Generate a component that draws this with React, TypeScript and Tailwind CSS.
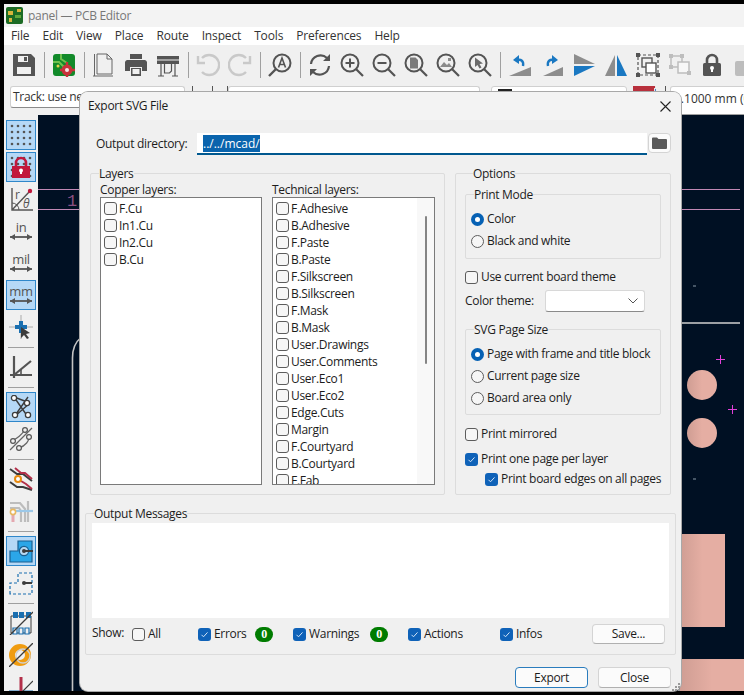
import React from 'react';

const G = '#545454';

const Ic = ({ children, size = 24 }: { children: React.ReactNode; size?: number }) => (
  <svg width={size} height={size} viewBox="0 0 24 24" fill="none">{children}</svg>
);

const Mag = ({ children, c = G }: { children?: React.ReactNode; c?: string }) => (
  <Ic>
    <circle cx="10" cy="10" r="8.5" stroke={c} strokeWidth="2" fill="#f0f0f0" />
    <path d="M16 16l7 7" stroke={c} strokeWidth="2.2" />
    {children}
  </Ic>
);

const topIcons: Record<string, React.ReactNode> = {
  save: <Ic><path fillRule="evenodd" d="M1 1h18l4 4v18H1zM6 3v6h10V3zM12 4h3v4h-3zM5 14v7h14v-7z" fill={G} /></Ic>,
  pcb: (
    <Ic>
      <rect x="1" y="1" width="22" height="22" rx="3" fill="#128a2a" />
      <path d="M1 9h6l5 5M9 1v5l6 4" stroke="#6fc04e" strokeWidth="2" />
      <circle cx="6" cy="13" r="1.5" fill="#e8d24a" />
      <circle cx="15" cy="17" r="5.5" fill="#c8323a" />
      <circle cx="15" cy="17" r="2" fill="#f4e4e4" />
      <path d="M15 9v3M15 22v2M8 17h2M20 17h3" stroke="#c8323a" strokeWidth="2.4" />
    </Ic>
  ),
  page: <Ic><path d="M5 1h10l5 5v15H5zM1 23h20M2.500 1v22M15 1v5h5" stroke="#666" strokeWidth="1" /></Ic>,
  print: <Ic><path fillRule="evenodd" d="M6 1h12v5H6zM3 7h18a3 3 0 0 1 2 2v9h-5v-4H6v4H1V9a3 3 0 0 1 2-2z" fill={G} /><rect x="7" y="15" width="10" height="8" fill={G} /><rect x="8.5" y="16" width="7" height="5" fill="#f0f0f0" /></Ic>,
  plot: <Ic><path d="M1 3h22v8H1z" fill={G} /><path d="M1 7h22" stroke="#f0f0f0" strokeWidth="1" /><path d="M5 11v12M19 11v12M2 23h6M16 23h6M8.500 11v9h5l2-2v-7" stroke={G} strokeWidth="1.2" /></Ic>,
  undo: <Ic><path d="M6 5a10 10 0 1 1 0 14" stroke="#c9c9c9" strokeWidth="2.4" /><path d="M2 3v7h7" stroke="#c9c9c9" strokeWidth="2.4" /></Ic>,
  redo: <Ic><path d="M18 5a10 10 0 1 0 0 14" stroke="#c9c9c9" strokeWidth="2.4" /><path d="M22 3v7h-7" stroke="#c9c9c9" strokeWidth="2.4" /></Ic>,
  find: <Ic><circle cx="14" cy="10" r="8.5" stroke={G} strokeWidth="2" /><path d="M8 16l-7 7" stroke={G} strokeWidth="2.4" /><path d="M10.500 14.500L14 5l3.500 9.500M11.800 11.500h4.400" stroke={G} strokeWidth="1.6" /></Ic>,
  refresh: <Ic><path d="M3 11a9.5 9.5 0 0 1 16-6M21 13a9.5 9.5 0 0 1-16 6" stroke={G} strokeWidth="2.2" /><path d="M22 1v7h-7zM2 23v-7h7z" fill={G} /></Ic>,
  zin: <Mag><path d="M10 5.500v9M5.500 10h9" stroke={G} strokeWidth="2" /></Mag>,
  zout: <Mag><path d="M5.500 10h9" stroke={G} strokeWidth="2" /></Mag>,
  zpage: <Mag><path d="M6 4.500h5.500L14 7v8.500H6z" fill="#7a7a7a" /></Mag>,
  zobj: <Mag><path d="M4 14l4-5 3 3 2-2 3 4zM12 5h3v3h-3z" fill="#8a8a8a" /></Mag>,
  zsel: <Mag><path d="M7 4.500l8 6-3.500.5 2 3.500-2 1-2-3.500L7 14z" fill="#6a6a6a" /></Mag>,
  rotccw: <Ic><path d="M1 23l22-9v9z" fill="#8d8d8d" /><path d="M15 13c1-5-2-7-6-6" stroke="#1a78c2" strokeWidth="2.4" /><path d="M11 2v9L5 7z" fill="#1a78c2" /></Ic>,
  rotcw: <Ic><path d="M23 23L3 14v9z" fill="#8d8d8d" transform="matrix(-1 0 0 1 26 0)" /><path d="M8 13c-1-5 2-7 6-6" stroke="#1a78c2" strokeWidth="2.4" /><path d="M12 2v9l6-4z" fill="#1a78c2" /></Ic>,
  mirH: <Ic><path d="M2 1l21 10H2z" fill="#8d8d8d" /><path d="M2 23l21-10H2z" fill="#1a78c2" /></Ic>,
  mirV: <Ic><path d="M11 2L1 23h10z" fill="#8d8d8d" /><path d="M13 2l10 21H13z" fill="#1a78c2" /></Ic>,
  group: <Ic><rect x="2" y="2" width="20" height="20" stroke={G} strokeWidth="1.2" strokeDasharray="3 2" /><path d="M0 0h4v4H0zM20 0h4v4h-4zM0 20h4v4H0zM20 20h4v4h-4z" fill={G} /><rect x="6" y="5" width="10" height="9" fill="#f0f0f0" stroke={G} strokeWidth="1.4" /><rect x="10" y="10" width="10" height="10" fill="#fff" stroke={G} strokeWidth="1.4" /></Ic>,
  ungroup: <Ic><rect x="3" y="3" width="11" height="11" stroke="#bdbdbd" strokeWidth="1.5" /><rect x="10" y="9" width="11" height="11" fill="#f7f7f7" stroke="#bdbdbd" strokeWidth="1.5" /><path d="M1 1h4v4H1zM12 1h4v4h-4zM1 12h4v4H1zM19 18h4v4h-4z" fill="#bdbdbd" /></Ic>,
  lock: <Ic><path d="M7 11V7a5 5 0 0 1 10 0v4" stroke={G} strokeWidth="2.6" /><rect x="3" y="10" width="18" height="13" rx="1.5" fill={G} /><circle cx="12" cy="15" r="2" fill="#fff" /><path d="M11 15h2v4h-2z" fill="#fff" /></Ic>,
  next: <Ic><rect x="3" y="8" width="18" height="15" rx="2" fill="#bdbdbd" /></Ic>,
};

const topBar = ['save', '|', 'pcb', '|', 'page', 'print', 'plot', '|', 'undo', 'redo', '|', 'find', '|', 'refresh', 'zin', 'zout', 'zpage', 'zobj', 'zsel', '|', 'rotccw', 'rotcw', 'mirH', 'mirV', 'group', 'ungroup', 'lock', 'next'];

const Dots = () => (
  <>
    {[4, 10, 16, 22].map(y => [3, 9, 15, 21].map(x => <circle key={`${x}-${y}`} cx={x} cy={y - 1} r="1.3" fill="#555" />))}
  </>
);

const UnitIcon = ({ label }: { label: string }) => (
  <Ic>
    <text x="12" y="13" textAnchor="middle" fontSize="13" fontFamily="'Open Sans', sans-serif" fill={G}>{label}</text>
    <path d="M1 18h22" stroke={G} strokeWidth="1.8" />
    <path d="M1 18l5-3v6zM23 18l-5-3v6z" fill={G} />
  </Ic>
);

const sideIcons: Record<string, React.ReactNode> = {
  grid: <Ic><Dots /></Ic>,
  snap: <Ic><Dots /><path d="M7 12V8a5 5 0 0 1 10 0v4" stroke="#c2183c" strokeWidth="2.6" /><path d="M3 11h18v12H3z" fill="#c2183c" /><circle cx="12" cy="15.500" r="2" fill="#fff" /><path d="M11 16h2v3h-2z" fill="#fff" /></Ic>,
  polar: (
    <Ic>
      <path d="M3 1v22h21M3 23L21 4" stroke={G} strokeWidth="1.4" />
      <path d="M3 16a7 7 0 0 1 7 7" stroke={G} strokeWidth="1" />
      <circle cx="21" cy="4" r="2.2" fill="#c2183c" />
      <text x="6" y="12" fontSize="12" fontFamily="'Open Sans', sans-serif" fill={G}>r</text>
      <text x="14" y="21" fontSize="12" fontStyle="italic" fontFamily="'Open Sans', sans-serif" fill={G}>θ</text>
    </Ic>
  ),
  inch: <UnitIcon label="in" />,
  mil: <UnitIcon label="mil" />,
  mm: <UnitIcon label="mm" />,
  cursor: <Ic><path d="M0 12h24M12 0v24" stroke="#aaa" strokeWidth="1" /><path d="M10 6h4v4h4v4h-4v4h-4v-4H6v-4h4z" fill="#1a6fb0" /><path d="M12 12l9 6-4 1 3 4-2 1-3-4-3 3z" fill="#3c3c3c" /></Ic>,
  angle: <Ic><path d="M5 1v22M1 20h22M5 20L22 6" stroke={G} strokeWidth="2.2" /><path d="M12 14v6" stroke={G} strokeWidth="1.6" /></Ic>,
  net: <Ic><path d="M5 2l16 6M5 2l14 20M19 2L5 22M21 8L5 22" stroke="#3c3c3c" strokeWidth="1.4" /><circle cx="5" cy="3" r="2.6" fill="#fff" stroke="#3c3c3c" strokeWidth="1.3" /><circle cx="18" cy="8" r="2.6" fill="#fff" stroke="#3c3c3c" strokeWidth="1.3" /><circle cx="6" cy="20" r="2.6" fill="#fff" stroke="#3c3c3c" strokeWidth="1.3" /><circle cx="19" cy="20" r="2.6" fill="#fff" stroke="#3c3c3c" strokeWidth="1.3" /></Ic>,
  ratsnest: <Ic><path d="M1 23L23 1" stroke="#666" strokeWidth="1.2" /><path d="M4 13c4-1 9-6 11-9M20 8c1 6-4 11-10 13" stroke="#666" strokeWidth="1.2" /><circle cx="4" cy="14" r="2.4" fill="#f0f0f0" stroke="#555" strokeWidth="1.2" /><circle cx="16" cy="3" r="2.4" fill="#f0f0f0" stroke="#555" strokeWidth="1.2" /><circle cx="20" cy="10" r="2.4" fill="#f0f0f0" stroke="#555" strokeWidth="1.2" /><circle cx="10" cy="21" r="2.4" fill="#f0f0f0" stroke="#555" strokeWidth="1.2" /></Ic>,
  track: <Ic><path d="M1 2l7 5h6l9 7M1 15l7 5h6l9 3" stroke="#3c3c3c" strokeWidth="2" /><path d="M6 1l6 5h4l7 6M12 14l5 3 6 5" stroke="#b3304a" strokeWidth="2" /><circle cx="9" cy="12" r="3" fill="#fff" stroke="#e88a10" strokeWidth="2" /></Ic>,
  ghost: <Ic><path d="M1 4h10l5 6v13M1 9h9l2 3v11M19 2v21" stroke="#bdbdbd" strokeWidth="2.2" /><path d="M4 16v7" stroke="#e4a8b0" strokeWidth="3" /><path d="M6 12h18" stroke="#9cc8e8" strokeWidth="2.2" /><circle cx="4" cy="13" r="2.6" fill="#fff" stroke="#e8b860" strokeWidth="1.6" /></Ic>,
  pad: <Ic><path d="M1 23V12h8V2h14v21z" fill="#2ba6e8" stroke="#1a5f90" strokeWidth="1.2" /><circle cx="15" cy="12" r="4.6" fill="#b7d8f2" stroke="#1a5f90" strokeWidth="1.2" /><path d="M14 12h10" stroke="#3c3c3c" strokeWidth="2" /><circle cx="15" cy="12" r="2" fill="#3c3c3c" /></Ic>,
  padDash: <Ic><path d="M1 23V12h8V2h14v21z" stroke="#1a6fb0" strokeWidth="1.2" strokeDasharray="3 2" /><path d="M14 12h9" stroke="#3c3c3c" strokeWidth="2" /><circle cx="15" cy="12" r="2" fill="#3c3c3c" /></Ic>,
  footprint: <Ic><path d="M2 5h20v17H2z" stroke="#3c3c3c" strokeWidth="1" /><path d="M4 1h5v6H4zM10 1h5v6h-5zM17 1h5v6h-5z" fill="#1a6fb0" /><path d="M4 17h4v6H4zM10 17h4v6h-4zM16 17h4v6h-4z" fill="#f0f0f0" stroke="#1a6fb0" strokeWidth="1.2" /><path d="M1 24L24 1" stroke="#3c3c3c" strokeWidth="1.3" /></Ic>,
  via: <Ic><circle cx="11" cy="12" r="8" stroke="#f09c10" strokeWidth="6" /><circle cx="14" cy="13" r="7" stroke="#cfcfcf" strokeWidth="1.4" /><path d="M0 24L24 0" stroke="#3c3c3c" strokeWidth="1.3" /></Ic>,
  tuned: <Ic><path d="M0 17h24" stroke="#1a6fb0" strokeWidth="3" /><path d="M12 2v22" stroke="#b3304a" strokeWidth="3" /><path d="M6 24L24 6M0 21h24" stroke="#3c3c3c" strokeWidth="1.2" /></Ic>,
};

const sideBar: [string, boolean][] = [
  ['grid', true], ['snap', true], ['polar', false], ['inch', false], ['mil', false], ['mm', true], ['cursor', false],
  ['|', false], ['angle', false], ['|', false], ['net', true], ['ratsnest', false], ['|', false], ['track', false],
  ['ghost', false], ['|', false], ['pad', true], ['padDash', false], ['|', false], ['footprint', false], ['via', false], ['tuned', false],
];

const copperLayers = ['F.Cu', 'In1.Cu', 'In2.Cu', 'B.Cu'];
const techLayers = ['F.Adhesive', 'B.Adhesive', 'F.Paste', 'B.Paste', 'F.Silkscreen', 'B.Silkscreen', 'F.Mask', 'B.Mask', 'User.Drawings', 'User.Comments', 'User.Eco1', 'User.Eco2', 'Edge.Cuts', 'Margin', 'F.Courtyard', 'B.Courtyard', 'F.Fab'];

const Check = ({ on = false }: { on?: boolean }) => (
  on ? (
    <span className="w-[13px] h-[13px] shrink-0 rounded-[3px] bg-[#0f62b8] flex items-center justify-center">
      <svg width="9" height="9" viewBox="0 0 9 9" fill="none"><path d="M1.500 4.800l2 2 4-4.400" stroke="#cfe3f7" strokeWidth="1" /></svg>
    </span>
  ) : (
    <span className="w-[13px] h-[13px] shrink-0 rounded-[3px] border border-[#5c5c5c] bg-[#f6f6f6]" />
  )
);

const Radio = ({ on = false }: { on?: boolean }) => (
  on ? (
    <span className="w-[13px] h-[13px] shrink-0 rounded-full bg-[#0661b4] flex items-center justify-center">
      <span className="w-[5px] h-[5px] rounded-full bg-white" />
    </span>
  ) : (
    <span className="w-[13px] h-[13px] shrink-0 rounded-full border border-[#5c5c5c] bg-[#f6f6f6]" />
  )
);

const LayerRow = ({ name }: { name: string }) => (
  <div className="h-[17px] shrink-0 flex items-center gap-[2px] pl-[3px]"><Check /><span>{name}</span></div>
);

const RadioRow = ({ label, on }: { label: string; on?: boolean }) => (
  <div className="h-[22px] flex items-center gap-[3px] pl-[5px]"><Radio on={on} /><span>{label}</span></div>
);

const CheckRow = ({ label, on, className = '' }: { label: string; on?: boolean; className?: string }) => (
  <div className={`h-[16px] flex items-center gap-[3px] whitespace-nowrap ${className}`}><Check on={on} /><span>{label}</span></div>
);

const Box = ({ title, className, children }: { title: string; className: string; children: React.ReactNode }) => (
  <fieldset className={`border border-[#dcdcdc] rounded-[2px] ${className}`}>
    <legend className="ml-[8px] leading-[16px] relative top-[1px]">{title}</legend>
    {children}
  </fieldset>
);

const Badge = () => (
  <span className="w-[18px] h-[15px] rounded-full bg-[#007c00] text-white flex items-center justify-center text-[12px] font-bold font-['Liberation_Serif',serif]">0</span>
);

const Combo = ({ className, children }: { className: string; children?: React.ReactNode }) => (
  <div className={`h-[22px] bg-white border border-[#d0d0d0] border-b-[#8a8a8a] rounded-[3px] shrink-0 flex items-center overflow-hidden whitespace-nowrap ${className}`}>{children}</div>
);

const Tick = ({ className }: { className: string }) => (
  <div className={`w-[1px] h-[22px] bg-[#555] shrink-0 ${className}`} />
);

const ExportDialog = () => (
  <div className="absolute left-[80px] top-[92px] w-[601px] h-[599px] bg-[#f0f0f0] rounded-[8px] shadow-[0_0_0_1px_#a8a8a8] flex flex-col text-[#1c1c1c] text-[12px]">
    <div className="h-[28px] bg-[#f3f3f3] rounded-t-[8px] flex items-center justify-between pl-[8px] pr-[10px] shrink-0">
      <span>Export SVG File</span>
      <svg width="11" height="11" viewBox="0 0 11 11"><path d="M0.500 0.500l10 10M10.500 0.500l-10 10" stroke="#222" strokeWidth="1.1" /></svg>
    </div>

    <div className="mt-[13px] h-[22px] flex items-start pl-[16px] shrink-0">
      <span className="w-[101px] leading-[22px]">Output directory:</span>
      <div className="w-[450px] h-[22px] bg-white border-b-2 border-[#00588f] pl-[6px] pt-[2px]">
        <span className="bg-[#0a64ad] text-white inline-block leading-[17px] tracking-[0px]">../../mcad/</span>
      </div>
      <div className="ml-[1px] w-[23px] h-[20px] bg-[#fbfbfb] border border-[#d4d4d4] rounded-[4px] flex items-center justify-center">
        <svg width="15" height="12" viewBox="0 0 15 12"><path d="M0 1.500a1 1 0 0 1 1-1h4l1.500 1.500H14a1 1 0 0 1 1 1V11a1 1 0 0 1-1 1H1a1 1 0 0 1-1-1z" fill="#5a5a5a" /></svg>
      </div>
    </div>

    <div className="mt-[10px] h-[330px] flex gap-[10px] pl-[10px] shrink-0">
      <Box title="Layers" className="w-[355px] h-[330px]">
        <div className="flex gap-[10px] px-[9px]">
          <div className="w-[162px]">
            <div className="h-[16px] leading-[18px]">Copper layers:</div>
            <div className="h-[288px] bg-white border border-[#7a7a7a] pt-[2px]">
              {copperLayers.map(l => <LayerRow key={l} name={l} />)}
            </div>
          </div>
          <div className="w-[163px]">
            <div className="h-[16px] leading-[18px]">Technical layers:</div>
            <div className="h-[288px] bg-white border border-[#7a7a7a] flex overflow-hidden">
              <div className="flex-1 pt-[2px] flex flex-col">
                {techLayers.map(l => <LayerRow key={l} name={l} />)}
              </div>
              <div className="w-[17px] bg-[#f8f8f8] flex justify-center pt-[18px]">
                <div className="w-[2px] h-[148px] bg-[#858585] rounded-full" />
              </div>
            </div>
          </div>
        </div>
      </Box>

      <Box title="Options" className="w-[216px] h-[330px] px-[9px]">
        <Box title="Print Mode" className="mt-[5px] h-[73px]">
          <div className="pt-[6px]">
            <RadioRow label="Color" on />
            <RadioRow label="Black and white" />
          </div>
        </Box>
        <CheckRow label="Use current board theme" className="mt-[10px]" />
        <div className="mt-[5px] h-[22px] flex items-center">
          <span className="w-[80px]">Color theme:</span>
          <Combo className="w-[100px] justify-end pr-[6px] border-[#d8d8d8]">
            <svg width="10" height="6" viewBox="0 0 10 6" fill="none"><path d="M0.500 0.500L5 5l4.500-4.500" stroke="#555" /></svg>
          </Combo>
        </div>
        <Box title="SVG Page Size" className="mt-[9px] h-[94px]">
          <div className="pt-[6px]">
            <RadioRow label="Page with frame and title block" on />
            <RadioRow label="Current page size" />
            <RadioRow label="Board area only" />
          </div>
        </Box>
        <CheckRow label="Print mirrored" className="mt-[11px]" />
        <CheckRow label="Print one page per layer" on className="mt-[9px]" />
        <CheckRow label="Print board edges on all pages" on className="mt-[4px] pl-[20px]" />
      </Box>
    </div>

    <Box title="Output Messages" className="mt-[10px] ml-[5px] w-[591px] h-[150px] shrink-0">
      <div className="mx-[6px] mt-[2px] h-[95px] bg-white" />
      <div className="mt-[6px] mx-[6px] h-[20px] flex items-center">
        <span className="w-[40px] -mt-[2px]">Show:</span>
        <div className="w-[66px]"><CheckRow label="All" /></div>
        <div className="w-[95px] flex items-center"><div className="w-[57px]"><CheckRow label="Errors" on /></div><Badge /></div>
        <div className="w-[115px] flex items-center"><div className="w-[77px]"><CheckRow label="Warnings" on /></div><Badge /></div>
        <div className="w-[92px]"><CheckRow label="Actions" on /></div>
        <CheckRow label="Infos" on />
        <button className="ml-auto mr-[4px] w-[73px] h-[20px] bg-[#fbfbfb] border border-[#d4d4d4] border-b-[#b0b0b0] rounded-[4px]">Save...</button>
      </div>
    </Box>

    <div className="mt-[12px] pr-[10px] flex justify-end gap-[10px]">
      <button className="w-[73px] h-[21px] bg-[#fbfbfb] border border-[#2a7cbd] rounded-[4px]">Export</button>
      <button className="w-[73px] h-[21px] bg-[#fbfbfb] border border-[#d4d4d4] border-b-[#b0b0b0] rounded-[4px]">Close</button>
    </div>

    <svg className="absolute right-0 bottom-0" width="10" height="9" viewBox="0 0 10 9" fill="#9a9a9a">
      <path d="M7 1h2v2H7zM4 4h2v2H4zM7 4h2v2H7zM1 7h2v2H1zM4 7h2v2H4zM7 7h2v2H7z" />
    </svg>
  </div>
);

export default function App() {
  return (
    <div className="relative w-[744px] h-[695px] bg-black overflow-hidden font-['Open_Sans',sans-serif] text-[12px] tracking-[-0.3px] text-[#333]">
      <div className="ml-[4px] pt-[4px] h-[691px] flex flex-col">
        <div className="h-[23px] bg-[#f3f3f3] flex items-center shrink-0 pl-[2px]">
          <svg width="17" height="17" viewBox="0 0 17 17">
            <rect width="17" height="17" rx="2" fill="#1c6b24" />
            <path d="M2 4h5v4H2zM11 2h4v3h-4zM3 11h3v4H3z" fill="#d8b53c" />
            <path d="M9 8h6v3H9z" fill="#62a83a" />
          </svg>
          <span className="ml-[5px] text-[#777]">panel — PCB Editor</span>
        </div>

        <div className="h-[18px] bg-white flex items-center shrink-0 pl-[7px] gap-[13px] tracking-[-0.15px]">
          {['File', 'Edit', 'View', 'Place', 'Route', 'Inspect', 'Tools', 'Preferences', 'Help'].map(m => <span key={m}>{m}</span>)}
        </div>

        <div className="h-[40px] bg-[#f0f0f0] flex items-center shrink-0 pl-[4px] overflow-hidden">
          {topBar.map((k, i) => k === '|' ? (
            <div key={i} className="w-[8px] h-[26px] shrink-0 flex justify-center"><div className="w-[1px] h-full bg-[#a0a0a0]" /></div>
          ) : (
            <div key={k} className="w-[32px] shrink-0 flex justify-center">{topIcons[k]}</div>
          ))}
        </div>

        <div className="h-[30px] bg-[#f0f0f0] flex items-start pt-[1px] shrink-0 pl-[6px] overflow-hidden">
          <Combo className="w-[175px] pl-[2px]">Track: use netclass sizes</Combo>
          <Tick className="ml-[7px]" />
          <Tick className="ml-[19px]" />
          <Tick className="ml-[14px]" />
          <Combo className="w-[252px]" />
          <div className="ml-[11px] w-[136px] h-[22px] bg-white border border-[#d0d0d0] rounded-[3px] shrink-0 pl-[6px] pt-[2px]"><div className="w-[14px] h-[14px] bg-[#222]" /></div>
          <div className="ml-[6px] w-[23px] h-[22px] shrink-0 bg-[linear-gradient(115deg,#b8303c_68%,#e8e8e8_68%,#e8e8e8_72%,#4a7fc4_72%)]" />
          <Tick className="ml-[9px]" />
          <div className="ml-[4px] w-[90px] h-[29px] bg-white border border-[#d0d0d0] border-b-[#a0a0a0] rounded-[3px] shrink-0 pl-[3px] pt-[4px] leading-[16px] tracking-[0px] whitespace-nowrap overflow-hidden">0.1000 mm (0.0039 in)</div>
        </div>

        <div className="flex-1 flex min-h-0">
          <div className="w-[34px] bg-[#f0f0f0] shrink-0 pt-[4px] flex flex-col items-center overflow-hidden">
            {sideBar.map(([k, on], i) => k === '|' ? (
              <div key={i} className="h-[8px] w-[26px] shrink-0 flex items-center"><div className="h-[1px] w-full bg-[#a0a0a0]" /></div>
            ) : (
              <div key={k} className="h-[32px] w-[30px] shrink-0 flex items-center justify-center">
                <div className={`w-[30px] h-[30px] flex items-center justify-center ${on ? 'bg-[#b5d8f6] border border-[#2f87ca]' : ''}`}>{sideIcons[k]}</div>
              </div>
            ))}
          </div>

          <svg className="flex-1 bg-[#001023]" viewBox="38 115 706 576" width="706" height="576">
            <defs>
              <linearGradient id="pad" x1="0" x2="1" y1="0" y2="0">
                <stop offset="0" stopColor="#cf9d93" />
                <stop offset="0.5" stopColor="#e5aea3" />
                <stop offset="1" stopColor="#e5aea3" />
              </linearGradient>
            </defs>
            <path d="M38 189.500h44M38 209.500h44M680 189.500h60M680 209.500h60" stroke="#c088b4" strokeWidth="1" />
            <text x="67" y="206" fontSize="17" fontFamily="'Liberation Mono', monospace" fill="#8a4f80">1</text>
            <path d="M72.500 692V358c0-8 3-16 8-20" stroke="#c4c4c4" strokeWidth="1.6" fill="none" />
            <path d="M680 323h60" stroke="#d0d0d0" strokeWidth="1.5" />
            <path d="M716 359.500h9M720.500 355v9M728 409.500h9M732.500 405v9" stroke="#e040d8" strokeWidth="1" />
            <path d="M693 286h3M693 479h3" stroke="#8a9aa8" strokeWidth="1" />
            <circle cx="702" cy="385" r="15" fill="url(#pad)" />
            <circle cx="702" cy="433" r="15" fill="url(#pad)" />
            <rect x="680" y="534" width="45" height="93" fill="url(#pad)" />
            <rect x="680" y="659" width="64" height="32" fill="url(#pad)" />
          </svg>
        </div>
      </div>
      <ExportDialog />
    </div>
  );
}
